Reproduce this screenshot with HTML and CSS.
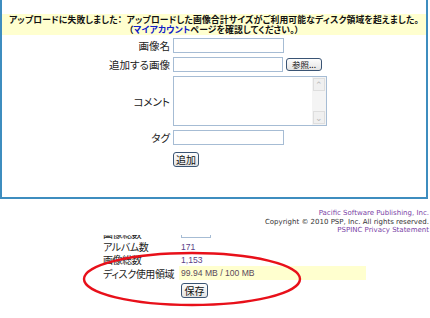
FILE: index.html
```html
<!DOCTYPE html>
<html lang="ja">
<head>
  <meta charset="UTF-8" />
  <title>画像の追加</title>
  <link rel="stylesheet" href="styles.css">
</head>
<body>

  <!-- ダイアログ -->
  <div class="dialogo">
    <div class="error">
      アップロードに失敗しました：&nbsp; アップロードした画像合計サイズがご利用可能なディスク領域を超えました。<br>
      （<a href="#">マイアカウント</a>ページを確認してください。）
    </div>

    <div class="formulario">
      <label>画像名</label>
      <div><input type="text" class="campo"></div>

      <label>追加する画像</label>
      <div class="fila-archivo"><input type="text" class="campo"><button class="boton boton-ref">参照...</button></div>

      <label>コメント</label>
      <div class="area">
        <textarea></textarea>
        <div class="barra">
          <span class="flecha">&#8963;</span>
          <span class="flecha">&#8964;</span>
        </div>
      </div>

      <label>タグ</label>
      <div><input type="text" class="campo"></div>

      <span></span>
      <div><button class="boton boton-add">追加</button></div>
    </div>
  </div>

  <!-- 著作権 -->
  <div class="pie">
    <a href="#">Pacific Software Publishing, Inc.</a><br>
    Copyright &copy; 2010 PSP, Inc. All rights reserved.<br>
    <a href="#">PSPINC Privacy Statement</a>
  </div>

  <!-- アカウント情報 -->
  <div class="cuenta">
    <div class="fila fila-cortada">
      <span class="etiqueta">画像総数</span>
      <span class="valor"><span class="mini"></span></span>
    </div>
    <div class="fila">
      <span class="etiqueta">アルバム数</span>
      <span class="valor">171</span>
    </div>
    <div class="fila">
      <span class="etiqueta">画像総数</span>
      <span class="valor">1,153</span>
    </div>
    <div class="fila fila-disco">
      <span class="etiqueta">ディスク使用領域</span>
      <span class="valor">99.94 MB / 100 MB</span>
    </div>
    <div class="fila fila-boton">
      <span class="etiqueta"></span>
      <span class="valor"><button class="boton boton-guardar">保存</button></span>
    </div>

    <svg class="circulo" width="222" height="58" viewBox="0 0 222 58">
      <ellipse cx="111" cy="29" rx="108" ry="26" fill="none" stroke="#e8101a" stroke-width="2.4"/>
    </svg>
  </div>

</body>
</html>
```

FILE: styles.css
```css
* {
  box-sizing: border-box;
  margin: 0;
  padding: 0;
}

body {
  width: 430px;
  height: 318px;
  overflow: hidden;
  background: #fff;
  color: #111;
  font-family: "Noto Sans CJK JP", sans-serif;
  font-feature-settings: "palt";
  font-size: 11px;
}

.dialogo {
  width: 428px;
  border: 2px solid #3d8dbf;
  border-top: none;
  padding-top: 14px;
  padding-bottom: 30px;
}

.error {
  background: #ffffcf;
  text-align: center;
  font-weight: bold;
  font-size: 8.8px;
  line-height: 10px;
  padding: 1px 0 0;
  white-space: nowrap;
  letter-spacing: 0.15px;
}

.error a {
  color: #1020c8;
  text-decoration: none;
}

.formulario {
  display: grid;
  grid-template-columns: 168px 1fr;
  column-gap: 3px;
  row-gap: 4px;
  margin-top: 3px;
}

.formulario label {
  display: flex;
  align-items: center;
  justify-content: flex-end;
  font-size: 10.5px;
  color: #222;
}

.campo {
  display: block;
  width: 111px;
  height: 15px;
  border: 1px solid #a6bcd4;
  background: #fff;
}

.fila-archivo {
  display: flex;
  align-items: center;
  gap: 3px;
}

.fila-archivo .campo {
  width: 110px;
}

.boton {
  font-family: "Noto Sans CJK JP", sans-serif;
  font-size: 9.5px;
  line-height: 11px;
  color: #111;
  border: 1px solid #3a5474;
  border-radius: 3px;
  background: linear-gradient(#fdfdfd, #e3e3e3);
}

.boton-ref {
  width: 36px;
  height: 13px;
  font-size: 8.5px;
}

.boton-add {
  width: 26px;
  height: 15px;
  margin-top: 3px;
  font-size: 10px;
}

.area {
  display: flex;
  width: 154px;
  height: 50px;
  border: 1px solid #a6bcd4;
}

.area textarea {
  flex: 1;
  border: none;
  resize: none;
  outline: none;
}

.barra {
  width: 14px;
  display: flex;
  flex-direction: column;
  justify-content: space-between;
  background: #f4f4f4;
  padding: 1px 0;
}

.flecha {
  height: 13px;
  margin: 0 1px;
  border: 1px solid #dedede;
  background: #f0f0f0;
  color: #b8b8b8;
  font-size: 9px;
  line-height: 12px;
  text-align: center;
}

.pie {
  margin-top: 10px;
  padding-right: 1px;
  text-align: right;
  font-family: "DejaVu Sans", sans-serif;
  font-size: 7px;
  line-height: 8.7px;
  color: #333;
}

.pie a {
  color: #7a3fa6;
  text-decoration: none;
}

.cuenta {
  position: relative;
  height: 83px;
  overflow: hidden;
  padding-left: 103px;
}

.fila {
  display: flex;
  align-items: center;
  height: 13px;
}

.fila-cortada {
  margin-top: -8px;
}

.etiqueta {
  width: 76px;
  font-size: 10px;
  letter-spacing: -0.4px;
  white-space: nowrap;
  color: #222;
}

.valor {
  width: 187px;
  padding-left: 2px;
  font-family: "Liberation Sans", sans-serif;
  font-size: 8.6px;
  color: #5a3f88;
}

.mini {
  display: block;
  width: 30px;
  height: 10px;
  border: 1px solid #a6bcd4;
  border-top: none;
  margin-top: -1px;
}

.fila-disco {
  height: 14px;
}

.fila-disco .valor {
  background: #ffffcf;
  height: 14px;
  line-height: 14px;
  color: #5b4a5c;
}

.fila-boton {
  height: 15px;
  margin-top: 3px;
}

.boton-guardar {
  width: 27px;
  height: 15px;
  font-size: 10px;
}

.circulo {
  position: absolute;
  left: 81px;
  top: 15px;
}
```
